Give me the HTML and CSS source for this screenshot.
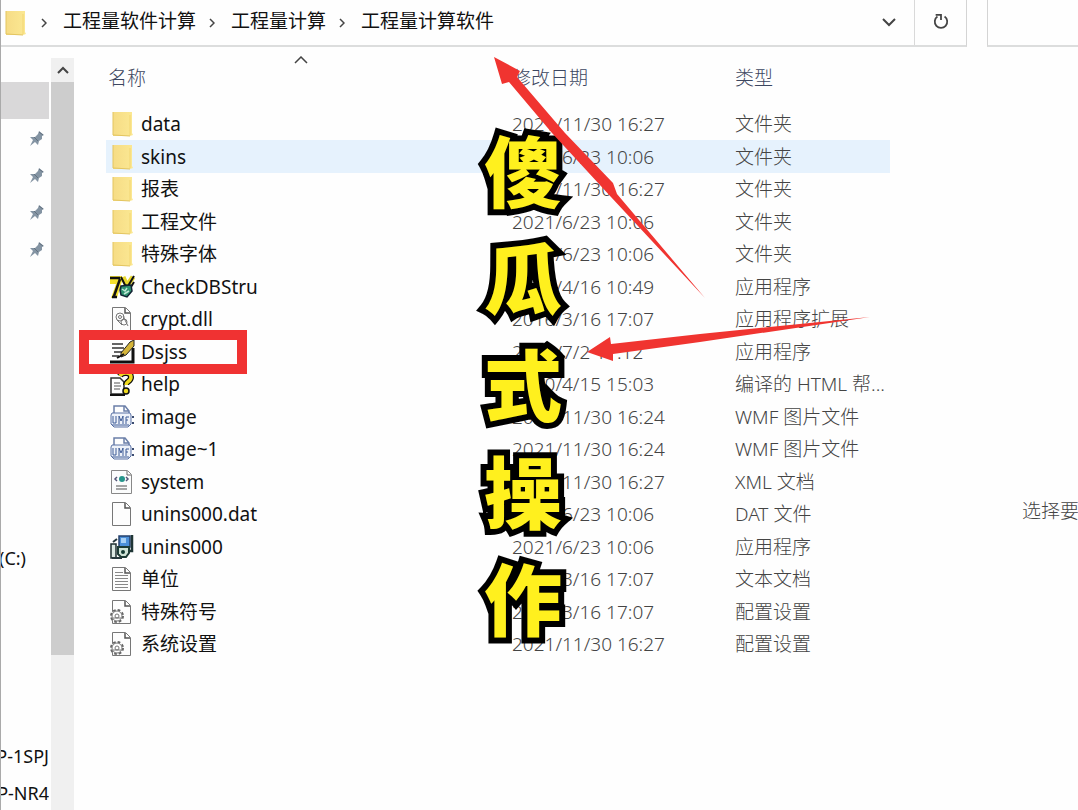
FILE: index.html
```html
<!DOCTYPE html>
<html lang="zh-CN">
<head>
  <meta charset="UTF-8" />
  <meta name="viewport" content="width=device-width, initial-scale=1.0" />
  <title>工程量计算软件</title>
  <link rel="stylesheet" href="styles.css">
</head>
<body>
  <svg class="sprite" aria-hidden="true">
    <defs>
      <linearGradient id="fold" x1="0" x2="1">
        <stop offset="0" stop-color="#f6dc85" />
        <stop offset="1" stop-color="#fbe893" />
      </linearGradient>
    </defs>
    <symbol id="folder" viewBox="0 0 26 26">
      <path d="M4 1h19v21l1 2-3 1H4z" fill="url(#fold)" />
      <path d="M4 1v23l17 1" fill="none" stroke="#e3c561" />
      <path d="M21 4v20" stroke="#f3d672" />
    </symbol>
    <symbol id="page" viewBox="0 0 26 26">
      <path d="M3.500 1.500h13l5 5v18h-18z" fill="#fdfdfd" stroke="#777" />
      <path d="M16 2v5h5" fill="none" stroke="#555" stroke-width="1.500" />
    </symbol>
    <symbol id="check" viewBox="0 0 26 26">
      <path d="M1 2h12v5L8 24H2l5-14H1z" fill="#f4e02c" />
      <path d="M1 4h10M11 5 5 22M3 23h5" stroke="#111" stroke-width="2.500" fill="none" />
      <path d="M14 3l4 9 6-9" fill="none" stroke="#e8d82a" stroke-width="5" />
      <path d="M12 3l4 8 3 1 6-10M25 8l-3 5" fill="none" stroke="#111" stroke-width="2" />
      <path d="M12 12l10-1 1 6-5 6-6-2-1-5z" fill="#2f9270" stroke="#123" stroke-width="1.500" />
      <path d="M13 15l3 2 2-3M15 20l5-3" stroke="#bfe8d5" stroke-width="1.500" fill="none" />
    </symbol>
    <symbol id="dll" viewBox="0 0 26 26">
      <use href="#page" />
      <circle cx="11" cy="11" r="4" fill="none" stroke="#777" />
      <circle cx="11" cy="11" r="1.500" fill="none" stroke="#777" />
      <circle cx="15" cy="16" r="3" fill="none" stroke="#777" />
      <path d="M14 10l5 10M8 14l5 5" stroke="#777" />
    </symbol>
    <symbol id="pen" viewBox="0 0 26 26">
      <path d="M3 5h11M3 9h12M5 13h8M3 17h7" stroke="#333" stroke-width="1.500" />
      <path d="M1 23h23V9" fill="none" stroke="#111" stroke-width="3" />
      <path d="M12 14 21 3l4-2v6l-8 9-5 2z" fill="#d5b53a" stroke="#222" />
      <path d="M8 19l7-4" stroke="#111" stroke-width="2" />
    </symbol>
    <symbol id="help" viewBox="0 0 26 26">
      <path d="M2 7h9l4 4v12H2z" fill="#fff" stroke="#333" stroke-width="1.500" />
      <path d="M5 12h6M5 15h7M5 18h6" stroke="#555" />
      <path d="M1 24h15" stroke="#111" stroke-width="2" />
      <path d="M11 5c2-4 11-4 11 1s-5 4-5 8" fill="none" stroke="#111" stroke-width="6" />
      <path d="M11 5c2-4 11-4 11 1s-5 4-5 8" fill="none" stroke="#f0da1e" stroke-width="3.500" />
      <circle cx="17" cy="20" r="3" fill="#f0da1e" stroke="#111" stroke-width="1.500" />
    </symbol>
    <symbol id="wmf" viewBox="0 0 26 26">
      <path d="M5 10V2h11l4 5v3M15 2v5h5" fill="none" stroke="#6b7fa8" stroke-width="1.500" />
      <path d="M3 9h18l1 2v9l-3 3H5l-3-3v-9z" fill="#eef2f9" stroke="#5a72a6" />
      <path d="M4 12v7h3v-7M10 20v-8l2 5 2-5v8M17 20v-7h3M17 16h2M3 21h17" fill="none" stroke="#3d5a96" />
      <path d="M24 12v2M24 18v2" stroke="#3b4c70" stroke-width="2" />
    </symbol>
    <symbol id="xml" viewBox="0 0 26 26">
      <path d="M2.500 1.500h16l4 4v19h-20z" fill="#fbfcfc" stroke="#888" />
      <path d="M18 2v4h4" fill="none" stroke="#666" />
      <circle cx="13" cy="10" r="3" fill="#25958b" />
      <path d="M8 8l-2 2 2 2M17 8l2 2-2 2" fill="none" stroke="#557" stroke-width="1.500" />
      <path d="M7 17h11M7 20h11" stroke="#888" stroke-width="1.500" />
    </symbol>
    <symbol id="setup" viewBox="0 0 26 26">
      <path d="M10 2h11v11H10z" fill="#4b8fd8" stroke="#25406b" stroke-width="1.500" />
      <path d="M12 4h5v5h-5z" fill="#a7d0f5" />
      <path d="M23 1v16h-4" fill="none" stroke="#1f3535" stroke-width="2.500" />
      <path d="M2 10h5v14H2z" fill="#dce9e3" stroke="#1e2f30" stroke-width="1.500" />
      <path d="M9 13h11v6l-3 4h-5l-3-3z" fill="#cfe3d6" stroke="#1d3b35" stroke-width="2" />
      <circle cx="14" cy="18" r="2" fill="#123a32" />
      <path d="M4 8l4-3M3 24h10" stroke="#26383c" stroke-width="2" />
    </symbol>
    <symbol id="text" viewBox="0 0 26 26">
      <use href="#page" />
      <path d="M6 6.500h8M6 9.500h13M6 12.500h13M6 15.500h13M6 18.500h13M6 21.500h13" stroke="#888" />
    </symbol>
    <symbol id="config" viewBox="0 0 26 26">
      <use href="#page" />
      <circle cx="8" cy="17" r="6" fill="#fff" stroke="#666" stroke-width="2" stroke-dasharray="2.700 2" />
      <circle cx="8" cy="17" r="5" fill="#fff" stroke="#777" />
      <circle cx="8" cy="17" r="2" fill="none" stroke="#777" />
      <path d="M4 19h8" stroke="#777" />
    </symbol>
    <symbol id="pin" viewBox="0 0 16 16">
      <path d="M10 1l5 4-2 1 0 3-3 2-1 4-3-3-5 4 3-6-3-3 5 0 3-3z" fill="#8494a3" />
      <path d="M10 2l4 3M5 7l4 4" stroke="#62717f" />
    </symbol>
  </svg>

  <header class="topbar">
    <nav class="address" aria-label="路径">
      <svg class="address-folder" viewBox="0 0 26 26"><use href="#folder" /></svg>
      <svg class="chevron" viewBox="0 0 6 10"><path d="M1 1l4 4-4 4" /></svg>
      <a href="#">工程量软件计算</a>
      <svg class="chevron" viewBox="0 0 6 10"><path d="M1 1l4 4-4 4" /></svg>
      <a href="#">工程量计算</a>
      <svg class="chevron" viewBox="0 0 6 10"><path d="M1 1l4 4-4 4" /></svg>
      <a href="#">工程量计算软件</a>
      <button class="drop" aria-label="历史记录"><svg viewBox="0 0 14 10"><path d="M1 2l6 6 6-6" /></svg></button>
      <button class="refresh" aria-label="刷新"><svg viewBox="0 0 18 20"><path d="M13 5a7 7 0 1 1-8 0M3 3h6v6" /></svg></button>
    </nav>
    <input class="search" type="text" aria-label="搜索">
  </header>

  <div class="explorer">
    <aside class="tree">
      <div class="tree-item selected"></div>
      <div class="tree-item pinned"><svg><use href="#pin" /></svg></div>
      <div class="tree-item pinned"><svg><use href="#pin" /></svg></div>
      <div class="tree-item pinned"><svg><use href="#pin" /></svg></div>
      <div class="tree-item pinned"><svg><use href="#pin" /></svg></div>
      <div class="tree-item drive">(C:)</div>
      <div class="tree-item network">P-1SPJ</div>
      <div class="tree-item">P-NR4</div>
    </aside>
    <div class="scrollbar">
      <button class="scroll-up" aria-label="向上滚动"><svg viewBox="0 0 14 10"><path d="M2 8l5-5 5 5" /></svg></button>
      <div class="thumb"></div>
    </div>

    <main class="files">
      <table>
        <thead>
          <tr>
            <th class="col-name"><svg class="sort" viewBox="0 0 14 8"><path d="M1 7l6-6 6 6" /></svg>名称</th>
            <th class="col-date">修改日期</th>
            <th class="col-type">类型</th>
          </tr>
        </thead>
        <tbody>
          <tr><td><span class="file"><svg><use href="#folder" /></svg>data</span></td><td>2021/11/30 16:27</td><td>文件夹</td></tr>
          <tr class="hover"><td><span class="file"><svg><use href="#folder" /></svg>skins</span></td><td>2021/6/23 10:06</td><td>文件夹</td></tr>
          <tr><td><span class="file"><svg><use href="#folder" /></svg>报表</span></td><td>2021/11/30 16:27</td><td>文件夹</td></tr>
          <tr><td><span class="file"><svg><use href="#folder" /></svg>工程文件</span></td><td>2021/6/23 10:06</td><td>文件夹</td></tr>
          <tr><td><span class="file"><svg><use href="#folder" /></svg>特殊字体</span></td><td>2021/6/23 10:06</td><td>文件夹</td></tr>
          <tr><td><span class="file"><svg><use href="#check" /></svg>CheckDBStru</span></td><td>2010/4/16 10:49</td><td>应用程序</td></tr>
          <tr><td><span class="file"><svg><use href="#dll" /></svg>crypt.dll</span></td><td>2016/3/16 17:07</td><td>应用程序扩展</td></tr>
          <tr><td><span class="file"><svg><use href="#pen" /></svg>Dsjss</span></td><td>2021/7/2 17:12</td><td>应用程序</td></tr>
          <tr><td><span class="file"><svg><use href="#help" /></svg>help</span></td><td>2010/4/15 15:03</td><td>编译的 HTML 帮...</td></tr>
          <tr><td><span class="file"><svg><use href="#wmf" /></svg>image</span></td><td>2021/11/30 16:24</td><td>WMF 图片文件</td></tr>
          <tr><td><span class="file"><svg><use href="#wmf" /></svg>image~1</span></td><td>2021/11/30 16:24</td><td>WMF 图片文件</td></tr>
          <tr><td><span class="file"><svg><use href="#xml" /></svg>system</span></td><td>2021/11/30 16:27</td><td>XML 文档</td></tr>
          <tr><td><span class="file"><svg><use href="#page" /></svg>unins000.dat</span></td><td>2021/6/23 10:06</td><td>DAT 文件</td></tr>
          <tr><td><span class="file"><svg><use href="#setup" /></svg>unins000</span></td><td>2021/6/23 10:06</td><td>应用程序</td></tr>
          <tr><td><span class="file"><svg><use href="#text" /></svg>单位</span></td><td>2016/3/16 17:07</td><td>文本文档</td></tr>
          <tr><td><span class="file"><svg><use href="#config" /></svg>特殊符号</span></td><td>2016/3/16 17:07</td><td>配置设置</td></tr>
          <tr><td><span class="file"><svg><use href="#config" /></svg>系统设置</span></td><td>2021/11/30 16:27</td><td>配置设置</td></tr>
        </tbody>
      </table>
    </main>

    <section class="preview">选择要</section>
  </div>

  <!-- marks drawn over the window -->
  <div class="mark-box"></div>
  <div class="caption"><span>傻</span><span>瓜</span><span>式</span><span>操</span><span>作</span></div>
  <svg class="arrows" width="1078" height="810" viewBox="0 0 1078 810">
    <path d="M494 57l26 14-3 6 48 56 48 50 4 11 88 104-94-101-59-64-43-51-7 2z" />
    <path d="M587 352l23-15 1 7 89-10 170-17-170 25-87 12 0 7z" />
  </svg>
</body>
</html>
```
FILE: styles.css
```css
* {
  box-sizing: border-box;
}
body {
  margin: 0;
  position: relative;
  min-height: 100vh;
  display: flex;
  flex-direction: column;
  overflow: hidden;
  background: #fefefe;
  border-left: 1px solid #aaa;
  border-bottom: 1px solid #aaa;
  font-family: "Noto Sans", "Noto Sans CJK SC", sans-serif;
  font-size: 19px;
  line-height: 28px;
  color: #111;
}
button {
  border: 0;
  padding: 0;
  background: none;
}
svg {
  flex: none;
}
.sprite {
  position: absolute;
  width: 0;
  height: 0;
}

/* address bar */
.topbar {
  display: flex;
  gap: 20px;
  height: 47px;
}
.address {
  flex: 1;
  display: flex;
  align-items: center;
  padding-left: 1px;
  border-right: 1px solid #d4d4d4;
  border-bottom: 2px solid #dcdddd;
}
.address a {
  color: #111;
  text-decoration: none;
  padding-bottom: 3px;
}
.address-folder {
  width: 26px;
  height: 28px;
}
.chevron {
  width: 6px;
  height: 10px;
  margin: 0 16px 0 13px;
}
.chevron path, .drop path, .refresh path, .scroll-up path, .sort path {
  fill: none;
  stroke: #444;
  stroke-width: 2;
}
.chevron path, .sort path {
  stroke-width: 1.5;
}
.drop {
  margin-left: auto;
  width: 50px;
  height: 100%;
}
.drop svg {
  width: 14px;
  height: 10px;
}
.refresh {
  width: 52px;
  height: 100%;
  border-left: 1px solid #d9d9d9;
}
.refresh svg {
  width: 16px;
  height: 18px;
}
.search {
  width: 91px;
  border: 0;
  border-left: 1px solid #d4d4d4;
  border-bottom: 2px solid #dcdddd;
  border-radius: 0;
  background: transparent;
}

/* navigation tree */
.explorer {
  flex: 1;
  display: flex;
}
.tree {
  width: 48px;
  padding-top: 35px;
  overflow: hidden;
}
.tree-item {
  display: flex;
  align-items: center;
  justify-content: flex-end;
  height: 37px;
  font-size: 18px;
  white-space: nowrap;
}
.tree-item svg {
  width: 16px;
  height: 16px;
  margin-right: 4px;
}
.selected {
  background: #d9d8d9;
}
.drive {
  margin-top: 272px;
  padding-right: 23px;
}
.network {
  margin-top: 161px;
}
.scrollbar {
  display: flex;
  flex-direction: column;
  width: 23px;
  margin-left: 2px;
  padding-top: 11px;
  background: linear-gradient(#fefefe 11px, #f0f0f0 11px);
}
.scroll-up {
  height: 24px;
}
.scroll-up svg {
  width: 14px;
  height: 10px;
}
.thumb {
  height: 573px;
  background: #cdcdcd;
}

/* file list */
.files {
  padding-left: 32px;
}
table {
  width: 784px;
  border-collapse: collapse;
  table-layout: fixed;
}
th {
  height: 61px;
  padding: 0 0 16px;
  vertical-align: bottom;
  text-align: left;
  font-weight: 300;
  color: #3c4660;
}
.col-name {
  width: 406px;
  padding-left: 2px;
  padding-right: 18px;
}
.col-date {
  width: 223px;
}
.sort {
  display: block;
  width: 14px;
  height: 8px;
  margin: 0 auto;
}
td {
  padding: 0;
  height: 32px;
  font-weight: 300;
  color: #444;
  white-space: nowrap;
}
tbody tr:nth-child(even) td {
  height: 33px;
}
.hover {
  background: #e6f2fd;
}
.file {
  display: flex;
  align-items: center;
  gap: 6px;
  padding-left: 3px;
  font-weight: 400;
  color: #111;
}
.file svg {
  width: 26px;
  height: 26px;
}
.preview {
  flex: 1;
  padding: 450px 0 0 132px;
  width: 0;
  font-weight: 300;
  color: #444;
  white-space: nowrap;
  overflow: hidden;
}

/* marks over the window */
.mark-box {
  position: absolute;
  left: 78px;
  top: 330px;
  width: 168px;
  height: 44px;
  border: 10px solid #f03232;
}
.caption {
  position: absolute;
  left: 483px;
  top: 115px;
  display: flex;
  flex-direction: column;
  font-family: "Noto Sans CJK SC", sans-serif;
  font-size: 78px;
  font-weight: 900;
  line-height: 107px;
  color: #fff01e;
  -webkit-text-stroke: 12px #000;
  paint-order: stroke fill;
}
.arrows {
  position: absolute;
  left: -1px;
  top: 0;
  pointer-events: none;
}
.arrows path {
  fill: #f03430;
}
```
